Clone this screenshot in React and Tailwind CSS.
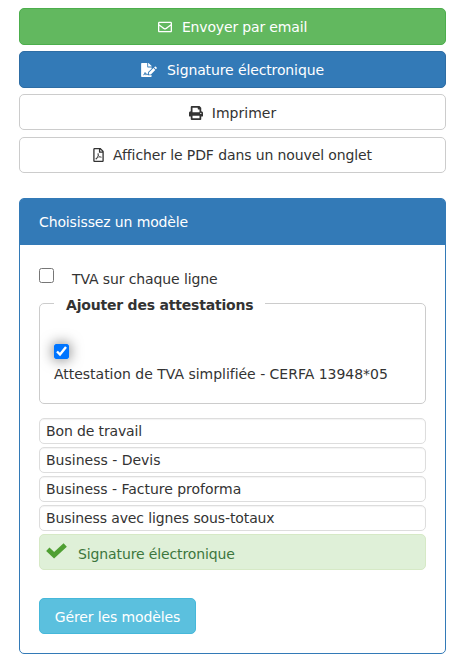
import { FaRegEnvelope, FaFileSignature, FaPrint, FaRegFilePdf } from "react-icons/fa";

const actions = [
  { label: "Envoyer par email", icon: FaRegEnvelope, iconClass: "h-[14px] w-[14px] mr-[10px]", className: "h-[37px] mb-[6px] border-[#4cae4c] bg-[#62b85f] text-white tracking-[-0.16px]" },
  { label: "Signature électronique", icon: FaFileSignature, iconClass: "h-[14px] w-[16px] mr-[10px]", className: "h-[37px] mb-[6px] border-[#2e6da4] bg-[#337ab7] text-white tracking-[-0.12px]" },
  { label: "Imprimer", icon: FaPrint, iconClass: "h-[14px] w-[14px] mr-[9px]", className: "h-[36px] mb-[7px] border-[#ccc] bg-white pt-[2px] text-[#333]" },
  { label: "Afficher le PDF dans un nouvel onglet", icon: FaRegFilePdf, iconClass: "h-[14px] w-[11px] mr-[9px]", className: "h-[36px] border-[#ccc] bg-white text-[#333] tracking-[-0.11px]" },
];

const models = [
  { label: "Bon de travail", className: "tracking-[-0.13px]" },
  { label: "Business - Devis", className: "tracking-normal" },
  { label: "Business - Facture proforma", className: "tracking-[-0.02px]" },
  { label: "Business avec lignes sous-totaux", className: "tracking-[-0.11px]" },
];

function ActionButton({ label, icon: Icon, iconClass, className }) {
  return (
    <button className={`flex w-full items-center justify-center rounded-[5px] border ${className}`}>
      <Icon className={`shrink-0 ${iconClass}`} />
      <span>{label}</span>
    </button>
  );
}

function CheckMark() {
  return (
    <svg viewBox="0 0 21 16" className="mr-[11px] mb-[2px] h-[16px] w-[21px] shrink-0 text-[#4f9f32]" fill="none" stroke="currentColor" strokeWidth="4.8" strokeLinejoin="miter">
      <path d="M1.8 6.3 L8.1 12.3 L19.2 2" />
    </svg>
  );
}

export default function App() {
  return (
    <main className="h-[666px] w-[458px] overflow-hidden bg-white pt-[8px] pr-[12px] pl-[19px] font-['DejaVu_Sans',sans-serif] text-[14px] leading-[20px] whitespace-nowrap text-[#333]">
      {actions.map((a) => (
        <ActionButton key={a.label} {...a} />
      ))}
      <section className="mt-[25px] h-[456px] rounded-[5px] border border-[#337ab7]">
        <header className="flex h-[46px] items-center rounded-t-[3px] bg-[#337ab7] px-[19px] tracking-[-0.13px] text-white">
          Choisissez un modèle
        </header>
        <div className="px-[19px] pt-[23px]">
          <label className="flex h-[23px] items-start">
            <input type="checkbox" className="m-0 h-[15px] w-[15px]" />
            <span className="mt-[1px] ml-[18px] tracking-[-0.11px]">TVA sur chaque ligne</span>
          </label>
          <fieldset className="h-[113px] rounded-[5px] border border-[#ccc] px-[14px]">
            <legend className="px-[12px] pt-[4px] font-bold tracking-[-0.2px]">Ajouter des attestations</legend>
            <input type="checkbox" defaultChecked className="mt-[29px] block h-[15px] w-[15px] rounded-[2px] shadow-[0_0_14px_rgba(0,0,0,0.6)]" />
            <div className="mt-[5px] tracking-[-0.02px]">Attestation de TVA simplifiée - CERFA 13948*05</div>
          </fieldset>
          <ul className="mt-[14px] flex flex-col gap-[3px]">
            {models.map((m) => (
              <li key={m.label} className={`flex h-[26px] items-center rounded-[5px] border border-[#ddd] px-[6px] shadow-[inset_0_1px_1px_rgba(0,0,0,0.05)] ${m.className}`}>
                {m.label}
              </li>
            ))}
            <li className="flex h-[36px] items-center rounded-[5px] border border-[#d6e9c6] bg-[#dff0d8] px-[6px] text-[#3c763d]">
              <CheckMark />
              <span className="mt-[4px] tracking-[-0.12px]">Signature électronique</span>
            </li>
          </ul>
          <button className="mt-[28px] flex h-[36px] w-[157px] items-center justify-center rounded-[5px] border border-[#46b8da] bg-[#5bc0de] pt-[2px] tracking-[-0.11px] text-white">
            Gérer les modèles
          </button>
        </div>
      </section>
    </main>
  );
}
